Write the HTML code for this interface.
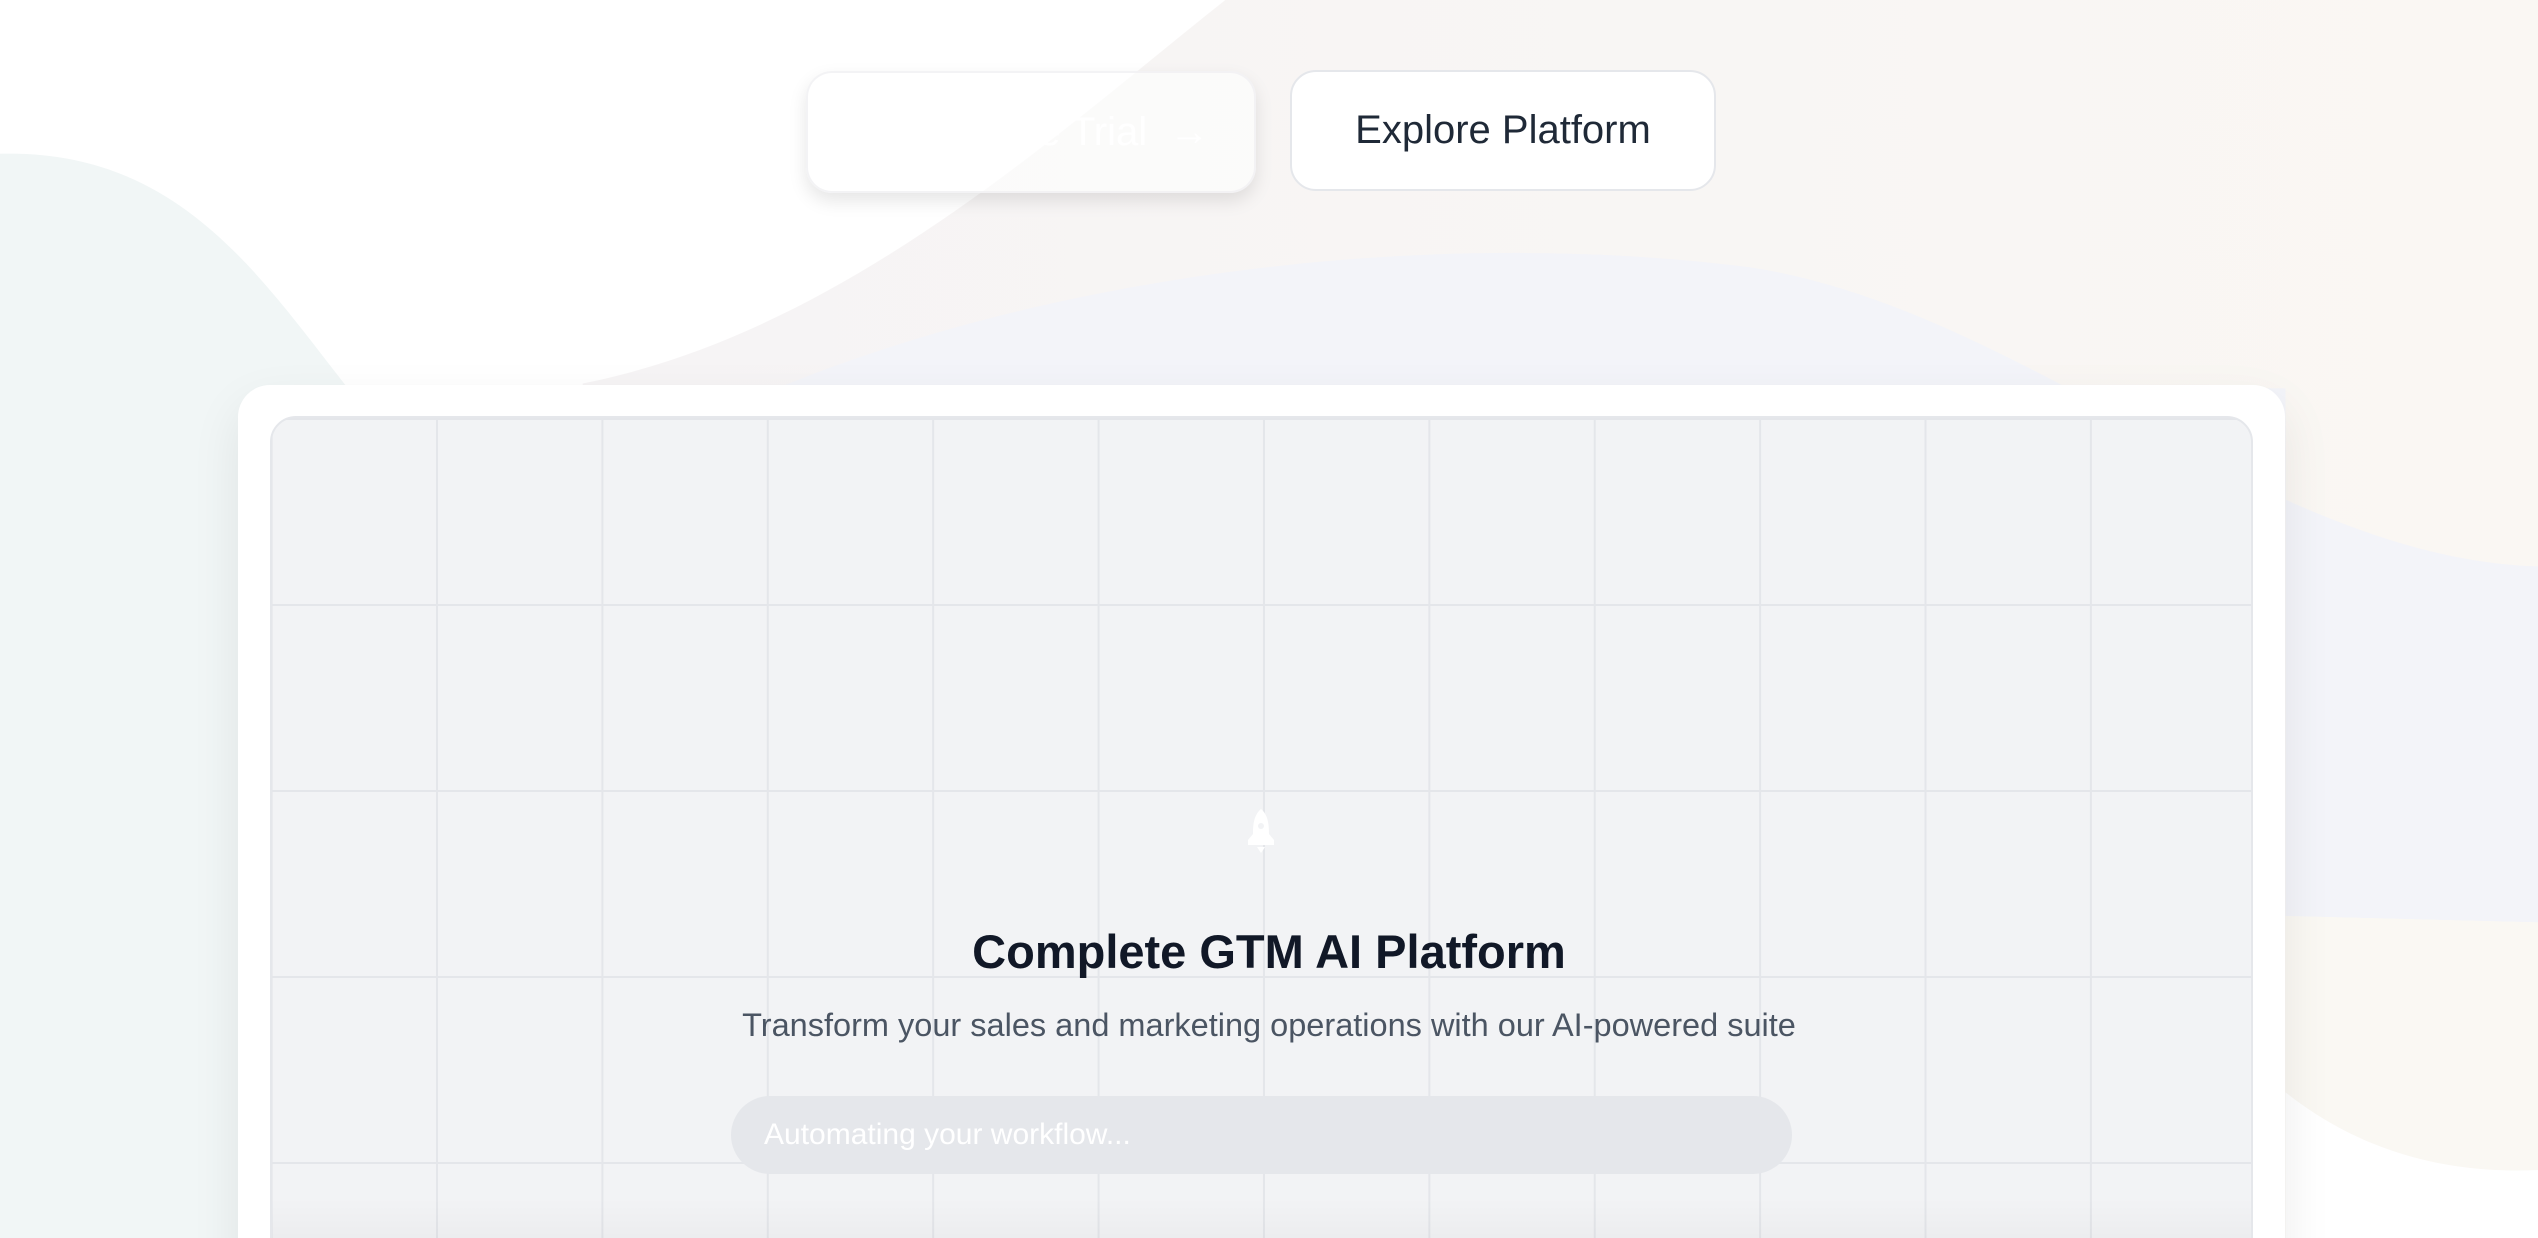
<!DOCTYPE html>
<html><head><meta charset="utf-8"><style>
html,body{margin:0;padding:0;width:2538px;height:1238px;overflow:hidden;background:#fff;font-family:"Liberation Sans",sans-serif;}
#wrap{position:relative;width:2538px;height:1238px;overflow:hidden}
.bg{position:absolute;left:0;top:0;width:2538px;height:1238px}
.btn{position:absolute;box-sizing:border-box;border-radius:26px;display:flex;align-items:center;justify-content:center;font-size:40px;}
.b1{left:806px;top:71px;width:450px;height:122px;background:rgba(255,255,255,0.55);color:#fff;box-shadow:0 8px 18px rgba(0,0,0,0.10);border:2px solid rgba(240,240,242,0.8);padding-left:30px}
.b2{left:1290px;top:70px;width:426px;height:121px;background:#fff;color:#1f2937;border:2px solid #e5e7eb;font-weight:500}
.card{position:absolute;left:238px;top:385px;width:2047px;height:900px;background:#fff;border-radius:32px;box-shadow:0 20px 50px rgba(0,0,0,0.08)}
.inner{position:absolute;left:270px;top:416px;width:1983px;height:860px;border-radius:26px;border:2px solid #e5e7eb;box-sizing:border-box;overflow:hidden;
background-color:#f2f3f5;
background-image:linear-gradient(to right,#e4e6ea 2px,transparent 2px),linear-gradient(to bottom,#e4e6ea 2px,transparent 2px);
background-size:165.4px 186px;background-position:164px 186px}
.shade{position:absolute;left:0;right:0;top:780px;height:80px;background:linear-gradient(to bottom,rgba(0,0,0,0),rgba(0,0,0,0.05))}
.t1{position:absolute;left:0;width:2538px;top:922px;text-align:center;font-size:47px;font-weight:bold;color:#111827;line-height:60px}
.t2{position:absolute;left:0;width:2538px;top:1005px;text-align:center;font-size:32.5px;color:#4b5563;line-height:40px}
.bar{position:absolute;left:731px;top:1096px;width:1061px;height:78px;border-radius:39px;background:#e5e7eb;color:#fff;font-size:30px;line-height:78px;padding-left:33px;box-sizing:border-box}
</style></head><body><div id="wrap">
<svg class="bg" viewBox="0 0 1568 765" preserveAspectRatio="none">
<defs><linearGradient id="wg" x1="0" x2="1" y1="0" y2="0"><stop offset="0" stop-color="#f6f4f5"/><stop offset="1" stop-color="#faf7f3"/></linearGradient></defs>
<path d="M0,95 C110,92 160,170 215,240 L215,765 L0,765 Z" fill="#f1f6f6"/>
<path d="M757,0 L1568,0 L1568,765 L360,765 L360,237 C520,205 650,85 757,0 Z" fill="url(#wg)"/>
<path d="M480,240 C650,170 880,140 1080,165 C1250,190 1400,345 1568,350 L1568,570 L1412,566 L1412,240 Z" fill="#f3f4f9"/>
<path d="M1412,566 L1568,570 L1568,723 C1500,726 1450,705 1412,675 Z" fill="#faf8f3"/>
<path d="M1412,675 C1450,705 1500,726 1568,723 L1568,765 L1412,765 Z" fill="#fff"/>
</svg>
<div class="btn b1">Start Free Trial&nbsp;&nbsp;→</div>
<div class="btn b2">Explore Platform</div>
<div class="card"></div>
<div class="inner"><div class="shade"></div></div>
<svg style="position:absolute;left:1246px;top:808px" width="30" height="46" viewBox="0 0 30 46">
<path d="M15,1 C22,7 23,16 23,26 L28,32 L28,37 L2,37 L2,32 L7,26 C7,16 8,7 15,1 Z" fill="#fff"/>
<circle cx="15" cy="18" r="3" fill="#f2f3f5"/>
<path d="M11,39 L19,39 L15,45 Z" fill="#fff"/>
</svg>
<div class="t1">Complete GTM AI Platform</div>
<div class="t2">Transform your sales and marketing operations with our AI-powered suite</div>
<div class="bar">Automating your workflow...</div>
</div></body></html>
